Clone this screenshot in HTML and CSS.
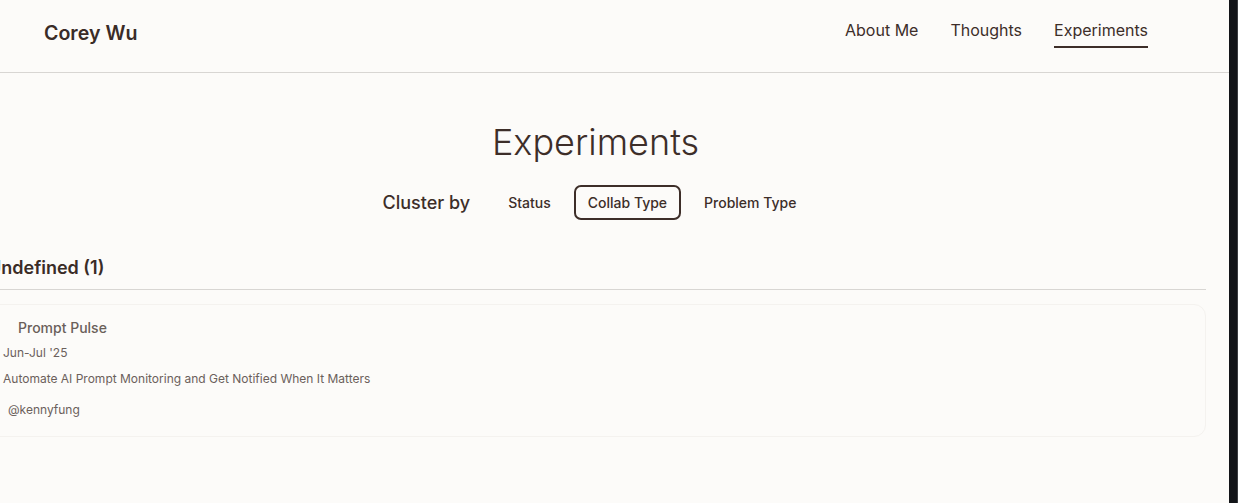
FILE: index.html
```html
<!DOCTYPE html>
<html lang="en">
<head>
<meta charset="utf-8">
<title>Experiments – Corey Wu</title>
<link rel="stylesheet" href="styles.css">
</head>
<body>
<div class="frame">
  <div class="viewport">
    <header class="site-header">
      <div class="brand">Corey Wu</div>
      <nav class="nav">
        <a class="nav-link" href="#">About Me</a>
        <a class="nav-link" href="#">Thoughts</a>
        <a class="nav-link active" href="#">Experiments</a>
      </nav>
    </header>
    <main class="content">
      <h1 class="page-title">Experiments</h1>
      <div class="cluster">
        <span class="cluster-label">Cluster by</span>
        <div class="cluster-options">
          <button class="chip">Status</button>
          <button class="chip selected">Collab Type</button>
          <button class="chip">Problem Type</button>
        </div>
      </div>
      <section class="group">
        <h2 class="group-title">Undefined (1)</h2>
        <article class="card">
          <div class="card-title">Prompt Pulse</div>
          <div class="card-date">Jun-Jul '25</div>
          <div class="card-desc">Automate AI Prompt Monitoring and Get Notified When It Matters</div>
          <div class="card-user">@kennyfung</div>
        </article>
      </section>
    </main>
  </div>
  <div class="edge"></div>
</div>
</body>
</html>
```

FILE: styles.css
```css
* { box-sizing: border-box; }
html, body {
  margin: 0;
  padding: 0;
  height: 100%;
}
body {
  font-family: Inter, "Noto Sans", sans-serif;
  color: #3d2e29;
  background: #fcfbf9;
  overflow: hidden;
}
.frame {
  display: flex;
  height: 503px;
}
.viewport {
  width: 1229px;
  flex: none;
  background: #fcfbf9;
  overflow: hidden;
}
.edge {
  flex: 1;
  background: #121418;
  border-right: 1px solid #3a3c40;
}
.site-header {
  height: 73px;
  border-bottom: 1px solid #d8d6d3;
  display: flex;
  align-items: center;
  justify-content: space-between;
  padding: 0 81px 0 44px;
}
.brand {
  font-size: 19.6px;
  font-weight: 600;
  margin-top: -6px;
  color: #3a2c27;
}
.nav {
  display: flex;
  gap: 32px;
  margin-top: -4px;
}
.nav-link {
  font-size: 16px;
  color: #3d2e29;
  text-decoration: none;
  padding-bottom: 6px;
  border-bottom: 2px solid transparent;
  line-height: 20px;
}
.nav-link.active {
  border-bottom-color: #3d2e29;
}
.content {
  margin-left: -15px;
  width: 1221px;
}
.page-title {
  margin: 0;
  padding-top: 47px;
  text-align: center;
  font-size: 36px;
  font-weight: 300;
  line-height: 44px;
  color: #3d2e29;
}
.cluster {
  display: flex;
  justify-content: center;
  align-items: center;
  gap: 23px;
  margin-top: 21px;
  padding-left: 3px;
}
.cluster-label {
  font-size: 18px;
  font-weight: 500;
  color: #3d2e29;
}
.cluster-options {
  display: flex;
  gap: 8px;
}
.chip {
  font-family: inherit;
  font-size: 14px;
  font-weight: 500;
  color: #3d2e29;
  background: transparent;
  border: 2px solid transparent;
  border-radius: 7px;
  padding: 0 13px;
  height: 35px;
}
.chip.selected {
  border-color: #3d2e29;
  padding: 0 12px;
}
.group {
  margin-top: 37px;
}
.group-title {
  margin: 0;
  font-size: 18px;
  font-weight: 600;
  line-height: 22px;
  padding: 0 0 10px 3px;
  border-bottom: 1px solid #d8d6d3;
  color: #3a2c27;
}
.card {
  margin-top: 14px;
  border: 1px solid #f4f2ef;
  border-radius: 12px;
  padding: 14px 16px 18px 17px;
  color: #6b605b;
}
.card-title {
  font-size: 14px;
  font-weight: 500;
  padding-left: 15px;
  line-height: 18px;
  color: #6a5f5a;
}
.card-date {
  font-size: 12px;
  margin-top: 8px;
  line-height: 16px;
}
.card-desc {
  font-size: 12px;
  margin-top: 10px;
  line-height: 16px;
}
.card-user {
  font-size: 12px;
  margin-top: 15px;
  padding-left: 5px;
  line-height: 16px;
}
```
